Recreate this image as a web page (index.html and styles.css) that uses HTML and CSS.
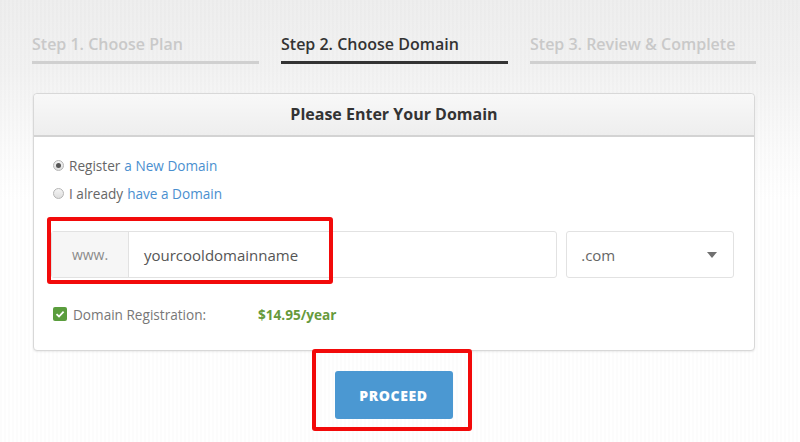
FILE: index.html
```html
<!DOCTYPE html>
<html>
<head>
<meta charset="utf-8">
<link rel="stylesheet" href="styles.css">
</head>
<body>
<div class="page">
  <div class="steps">
    <div class="step">Step 1. Choose Plan</div>
    <div class="step active">Step 2. Choose Domain</div>
    <div class="step">Step 3. Review &amp; Complete</div>
  </div>

  <div class="card">
    <div class="card-head">Please Enter Your Domain</div>
    <div class="card-body">
      <label class="radio-row"><span class="radio checked"></span>Register <a class="link">a New Domain</a></label>
      <label class="radio-row"><span class="radio"></span>I already <a class="link">have a Domain</a></label>

      <div class="domain-row">
        <div class="input-group">
          <span class="addon">www.</span>
          <span class="field">yourcooldomainname</span>
        </div>
        <div class="select">
          <span>.com</span>
          <svg class="caret" width="10" height="6" viewBox="0 0 10 6"><path d="M0 0h10L5 6z" fill="#707070"/></svg>
        </div>
        <div class="highlight hl-input"></div>
      </div>

      <div class="reg-row">
        <span class="check"><svg width="10" height="8" viewBox="0 0 10 8"><path d="M1.5 4.2 4 6.5 8.6 1.6" fill="none" stroke="#fff" stroke-width="1.8"/></svg></span>
        <span class="reg-label">Domain Registration:</span>
        <span class="price">$14.95/year</span>
      </div>
    </div>
  </div>

  <div class="actions">
    <div class="btn-wrap">
      <button class="btn">PROCEED</button>
      <div class="highlight hl-btn"></div>
    </div>
  </div>
</div>
</body>
</html>
```

FILE: styles.css
```css
* { box-sizing: border-box; }
html, body { margin: 0; padding: 0; }
body {
  width: 800px;
  height: 442px;
  overflow: hidden;
  font-family: "Open Sans", "DejaVu Sans", sans-serif;
  background:
    repeating-linear-gradient(90deg, rgba(0,0,0,0.012) 0 2px, rgba(255,255,255,0) 2px 4px),
    linear-gradient(180deg, #eeeeee 0px, #f2f2f2 70px, #fbfbfb 150px, #ffffff 200px);
}
.page {
  padding: 32px 45px 0 32px;
}
.steps {
  display: grid;
  grid-template-columns: 227px 227px 226px;
  column-gap: 22px;
}
.step {
  font-size: 16px;
  font-weight: 600;
  letter-spacing: 0;
  line-height: 24px;
  color: #c9c9c9;
  padding-bottom: 5px;
  border-bottom: 3px solid #d0d0d0;
  white-space: nowrap;
}
.step.active {
  color: #333;
  border-bottom-color: #333;
}
.card {
  margin-top: 29px;
  margin-left: 1px;
  width: 722px;
  background: #fff;
  border: 1px solid #d8d8d8;
  border-radius: 4px;
  box-shadow: 0 1px 2px rgba(0,0,0,0.08);
}
.card-head {
  height: 43px;
  line-height: 41px;
  text-align: center;
  font-size: 16px;
  font-weight: 700;
  color: #333;
  background: linear-gradient(180deg, #f8f8f8, #eeeeee);
  border-bottom: 2px solid #d3d3d3;
  border-radius: 4px 4px 0 0;
}
.card-body {
  position: relative;
  padding: 16px 20px 24px 17px;
}
.radio-row {
  display: flex;
  align-items: center;
  height: 24px;
  margin-bottom: 4px;
  font-size: 13.6px;
  color: #666;
}
.radio {
  width: 11px;
  height: 11px;
  border-radius: 50%;
  border: 1px solid #b5b5b5;
  background: linear-gradient(180deg, #f4f4f4, #dedede);
  margin: 0 5px 0 2px;
  position: relative;
}
.radio.checked::after {
  content: "";
  position: absolute;
  left: 2px; top: 2px;
  width: 5px; height: 5px;
  border-radius: 50%;
  background: #555;
}
.link {
  color: #4a8fcf;
  margin-left: 4px;
  text-decoration: none;
}
.domain-row {
  position: relative;
  display: flex;
  gap: 9px;
  margin-top: 26px;
  height: 47px;
}
.input-group {
  display: flex;
  width: 507px;
  border: 1px solid #e2e2e2;
  border-radius: 3px;
}
.addon {
  width: 77px;
  background: #f6f6f6;
  border-right: 1px solid #e2e2e2;
  display: flex;
  align-items: center;
  justify-content: center;
  font-size: 14px;
  color: #8a8a8a;
}
.field {
  flex: 1;
  display: flex;
  align-items: center;
  padding-left: 15px;
  font-size: 15px;
  color: #555;
}
.select {
  width: 168px;
  border: 1px solid #e2e2e2;
  border-radius: 3px;
  display: flex;
  align-items: center;
  justify-content: space-between;
  padding: 0 16px 0 14px;
  font-size: 15px;
  color: #666;
}
.caret { margin-top: 1px; }
.highlight {
  position: absolute;
  border: 4px solid #f20a0a;
  border-radius: 3px;
  pointer-events: none;
}
.hl-input {
  left: -4px;
  top: -14px;
  width: 286px;
  height: 67px;
}
.reg-row {
  display: flex;
  align-items: center;
  height: 24px;
  margin-top: 24px;
  font-size: 13.6px;
}
.check {
  width: 14px;
  height: 14px;
  border-radius: 2px;
  background: #5a9d3d;
  display: flex;
  align-items: center;
  justify-content: center;
  margin: 0 6px 0 2px;
}
.reg-label {
  color: #777;
  width: 185px;
}
.price {
  color: #679a3c;
  font-weight: 700;
}
.actions {
  display: flex;
  justify-content: center;
  width: 723px;
}
.btn-wrap {
  position: relative;
  margin-top: 20px;
}
.btn {
  display: block;
  width: 118px;
  height: 48px;
  border: 0;
  border-radius: 3px;
  background: #4b98d2;
  color: #fff;
  font-family: "Open Sans", "DejaVu Sans", sans-serif;
  font-size: 14px;
  font-weight: 800;
  letter-spacing: 0.6px;
}
.hl-btn {
  left: -23px;
  top: -22px;
  width: 160px;
  height: 82px;
}
```
